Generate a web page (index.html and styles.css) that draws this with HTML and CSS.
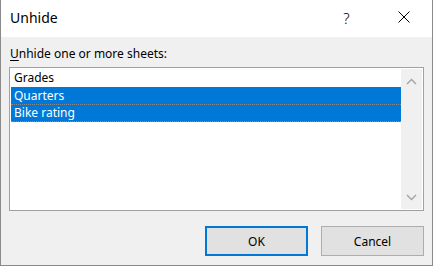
FILE: index.html
```html
<!DOCTYPE html>
<html>
<head>
  <title>Unhide</title>
  <link rel="stylesheet" href="styles.css">
</head>
<body>
  <div class="dialog">
    <div class="titlebar">
      <span class="title">Unhide</span>
      <span class="caption-btn help">?</span>
      <span class="caption-btn close">
        <svg width="12" height="12" viewBox="0 0 12 12">
          <path d="M0.5 0.5 L11.5 11.5 M11.5 0.5 L0.5 11.5" stroke="#000" stroke-width="1" fill="none"/>
        </svg>
      </span>
    </div>

    <div class="content">
      <div class="prompt"><u>U</u>nhide one or more sheets:</div>

      <!-- Sheet list -->
      <div class="listbox">
        <div class="items">
          <div class="item">Grades</div>
          <div class="item selected">Quarters</div>
          <div class="item selected focused">Bike rating</div>
        </div>
        <div class="scrollbar">
          <svg width="11" height="7" viewBox="0 0 11 7">
            <path d="M1 6 L5.5 1.5 L10 6" stroke="#a3a3a3" stroke-width="1.4" fill="none"/>
          </svg>
          <svg width="11" height="7" viewBox="0 0 11 7">
            <path d="M1 1 L5.5 5.5 L10 1" stroke="#a3a3a3" stroke-width="1.4" fill="none"/>
          </svg>
        </div>
      </div>

      <div class="actions">
        <button class="default">OK</button>
        <button>Cancel</button>
      </div>
    </div>
  </div>
</body>
</html>
```

FILE: styles.css
```css
html, body {
  margin: 0;
  padding: 0;
  background: #f0f0f0;
}
body {
  font-family: "Noto Sans", sans-serif;
  font-size: 12px;
  color: #000;
}
.dialog {
  width: 431px;
  height: 265px;
  border-left: 1px solid #8a8a8a;
  border-right: 1px solid #8a8a8a;
  border-bottom: 1px solid #8a8a8a;
  background: #f0f0f0;
  display: flex;
  flex-direction: column;
}
.titlebar {
  height: 37px;
  background: #fff;
  display: flex;
  align-items: center;
  flex-shrink: 0;
}
.title {
  flex: 1;
  padding-left: 9px;
  font-size: 14px;
  margin-top: -2px;
}
.caption-btn {
  width: 57px;
  height: 37px;
  display: flex;
  align-items: center;
  justify-content: center;
}
.help {
  font-size: 15px;
  font-weight: 300;
  margin-top: -2px;
}
.close svg {
  margin-top: -3px;
}

.content {
  flex: 1;
  padding: 0 8px;
  display: flex;
  flex-direction: column;
}
.prompt {
  padding: 8px 0 5px 1px;
  line-height: 17px;
}
.prompt u {
  text-underline-offset: 2px;
}

.listbox {
  height: 140px;
  border: 1px solid #a0a0a0;
  background: #fff;
  padding: 1px;
  display: flex;
}
.items {
  flex: 1;
}
.item {
  height: 17.5px;
  line-height: 17px;
  padding-left: 3px;
  box-sizing: border-box;
}
.item.selected {
  background: #0078d7;
  color: #fff;
}
.item.focused {
  border-top: 1px dotted #8a8a8a;
  border-bottom: 1px dotted #8a8a8a;
  line-height: 15px;
}
.scrollbar {
  width: 21px;
  background: #f0f0f0;
  display: flex;
  flex-direction: column;
  justify-content: space-between;
  align-items: center;
  padding: 9px 0 8px;
}

.actions {
  display: flex;
  justify-content: flex-end;
  gap: 13px;
  margin-top: 15px;
}
.actions button {
  width: 103px;
  height: 30px;
  background: #e1e1e1;
  border: 1px solid #adadad;
  font-family: "Noto Sans", sans-serif;
  font-size: 12px;
  color: #000;
  padding: 0;
}
.actions button.default {
  border: 2px solid #0078d7;
}
```
